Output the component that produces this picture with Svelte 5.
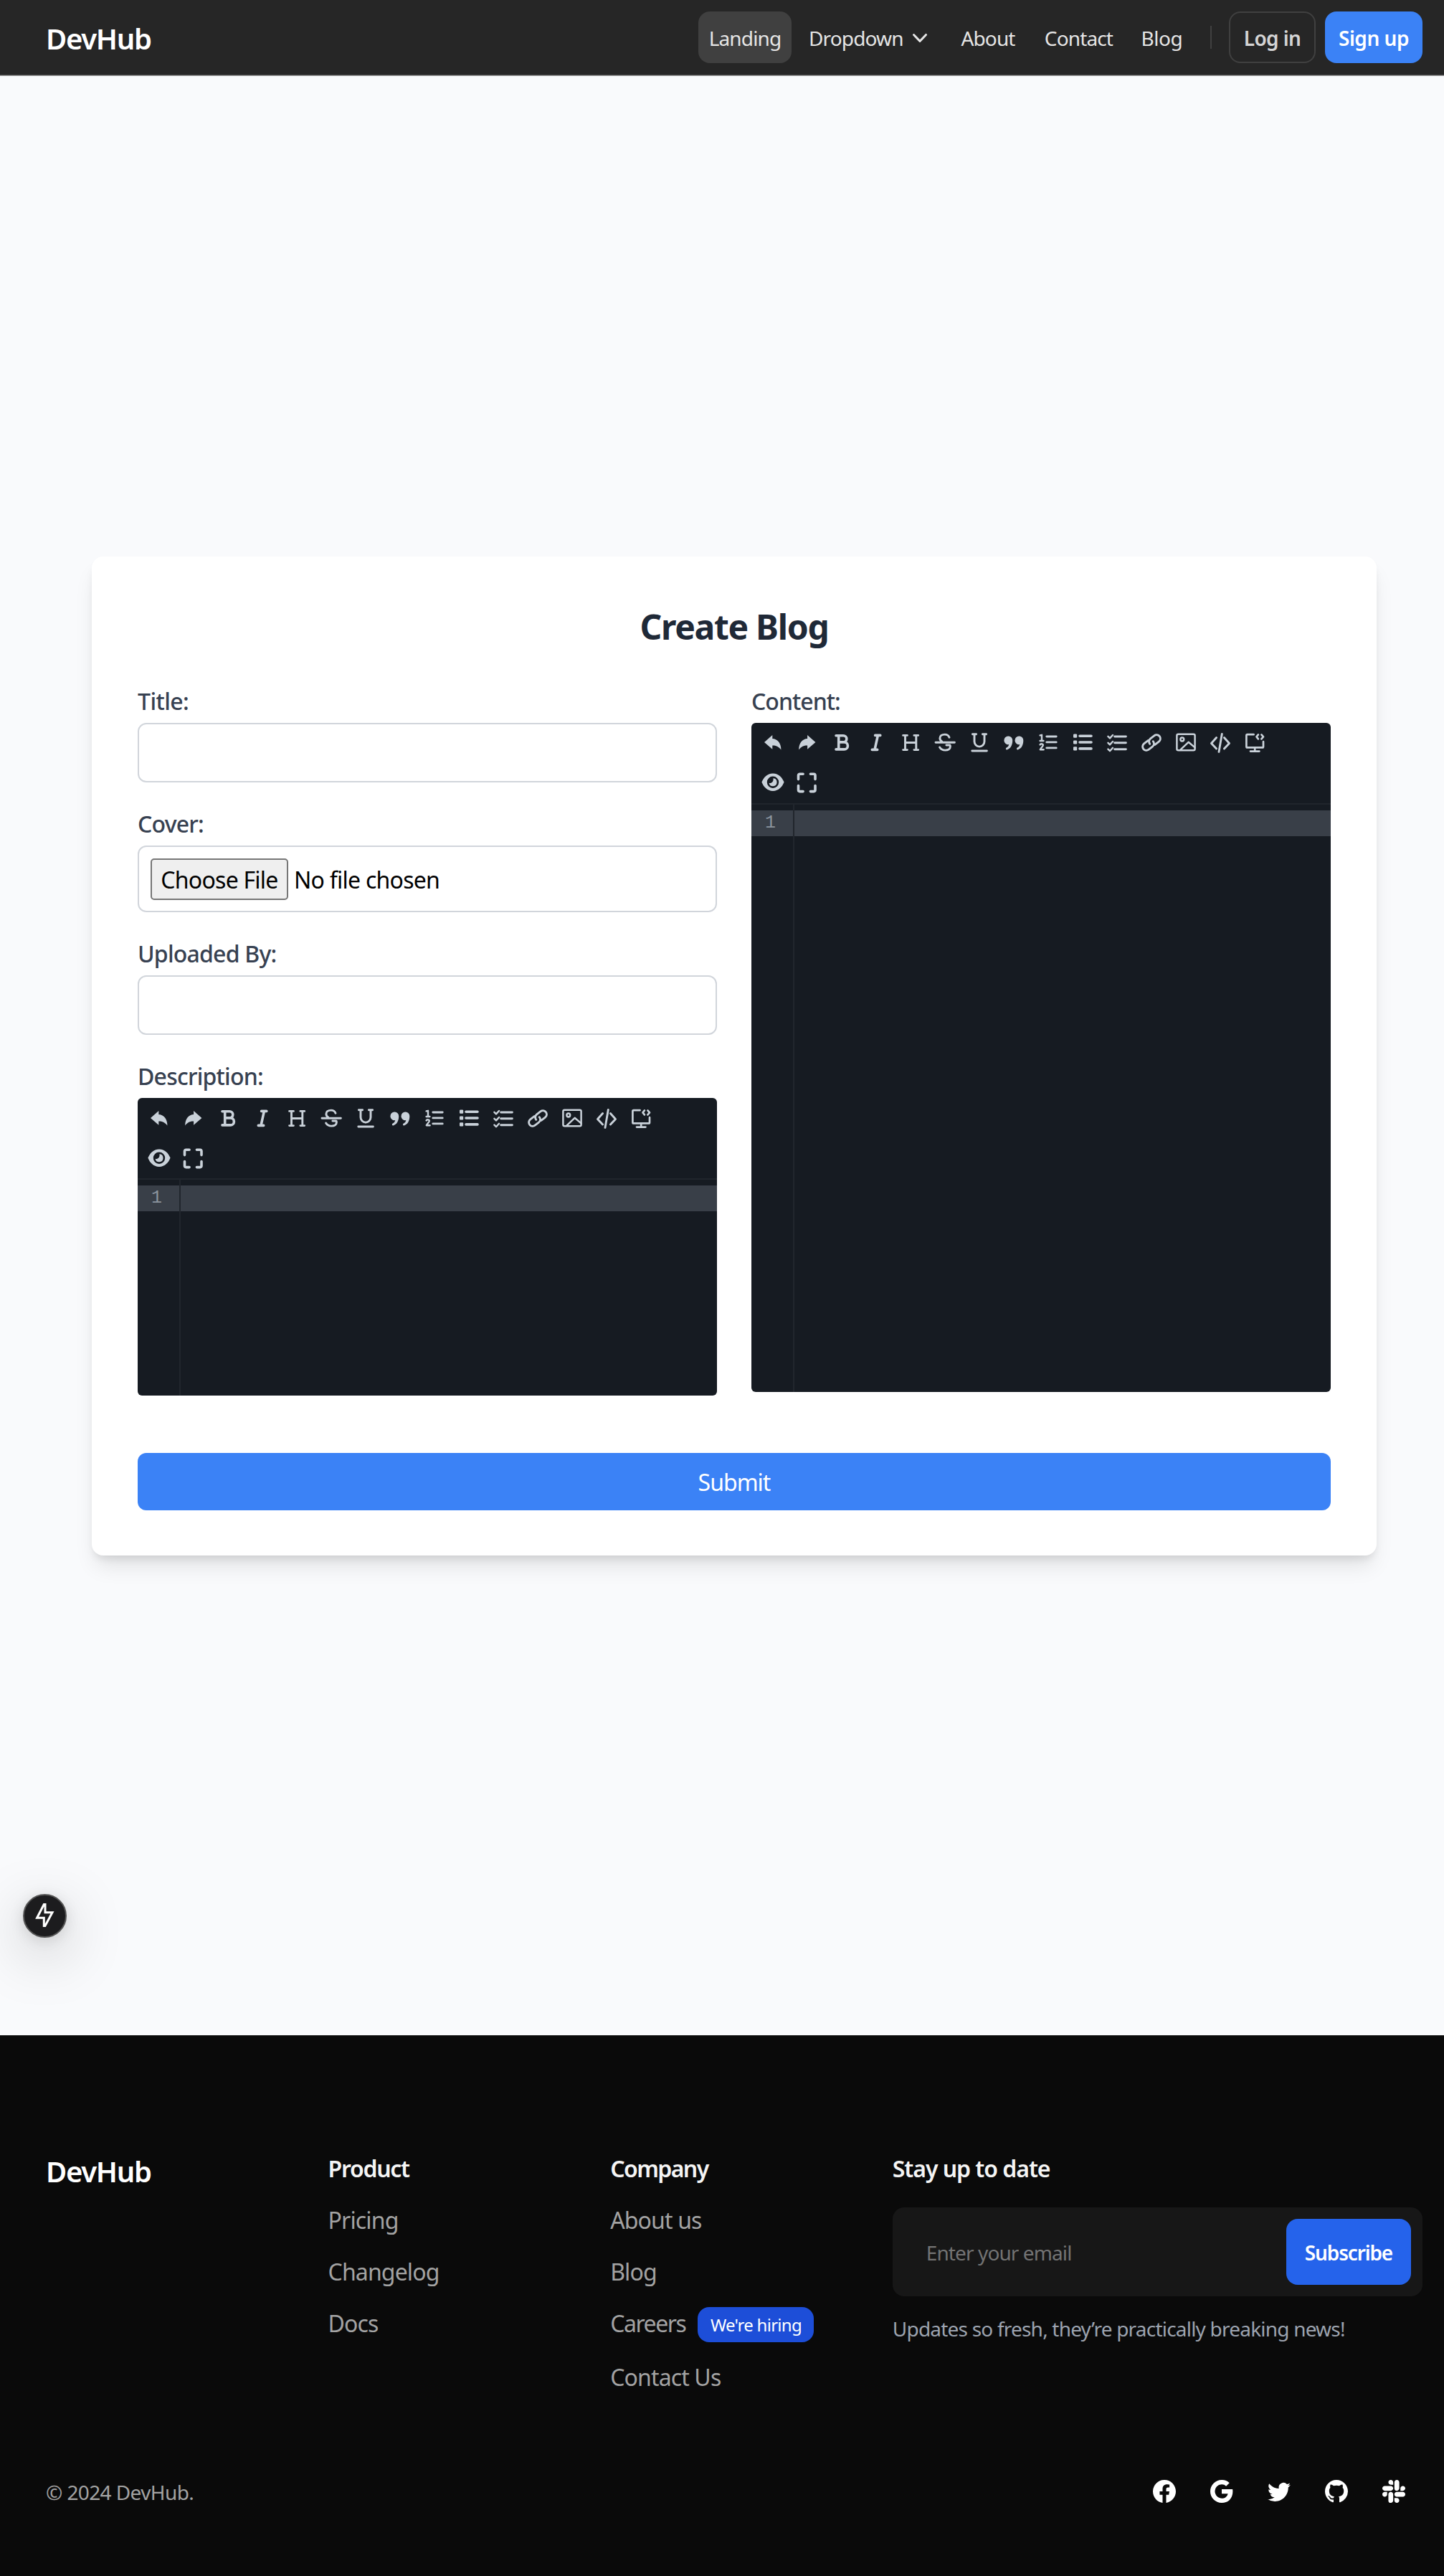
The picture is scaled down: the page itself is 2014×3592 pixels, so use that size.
<script>
  const tools = [
    'undo', 'redo', 'bold', 'italic', 'header', 'strike', 'underline', 'quote',
    'olist', 'ulist', 'todo', 'link', 'image', 'code', 'codeBlock', 'preview', 'fullscreen'
  ];

  const socials = [
    { name: 'Facebook', d: 'M16 8.049c0-4.446-3.582-8.05-8-8.05C3.58 0-.002 3.603-.002 8.05c0 4.017 2.926 7.347 6.75 7.951v-5.625h-2.03V8.05H6.75V6.275c0-2.017 1.195-3.131 3.022-3.131.876 0 1.791.157 1.791.157v1.98h-1.009c-.993 0-1.303.621-1.303 1.258v1.51h2.218l-.354 2.326H9.25V16c3.824-.604 6.75-3.934 6.75-7.951z' },
    { name: 'Google', d: 'M15.545 6.558a9.42 9.42 0 0 1 .139 1.626c0 2.434-.87 4.492-2.384 5.885h.002C11.978 15.292 10.158 16 8 16A8 8 0 1 1 8 0a7.689 7.689 0 0 1 5.352 2.082l-2.284 2.284A4.347 4.347 0 0 0 8 3.166c-2.087 0-3.86 1.408-4.492 3.304a4.792 4.792 0 0 0 0 3.063h.003c.635 1.893 2.405 3.301 4.492 3.301 1.078 0 2.004-.276 2.722-.764h-.003a3.702 3.702 0 0 0 1.599-2.431H8v-3.08h7.545z' },
    { name: 'Twitter', d: 'M5.026 15c6.038 0 9.341-5.003 9.341-9.334 0-.14 0-.282-.006-.422A6.685 6.685 0 0 0 16 3.542a6.658 6.658 0 0 1-1.889.518 3.301 3.301 0 0 0 1.447-1.817 6.533 6.533 0 0 1-2.087.793A3.286 3.286 0 0 0 7.875 6.03a9.325 9.325 0 0 1-6.767-3.429 3.289 3.289 0 0 0 1.018 4.382A3.323 3.323 0 0 1 .64 6.575v.045a3.288 3.288 0 0 0 2.632 3.218 3.203 3.203 0 0 1-.865.115 3.23 3.23 0 0 1-.614-.057 3.283 3.283 0 0 0 3.067 2.277A6.588 6.588 0 0 1 .78 13.58a6.32 6.32 0 0 1-.78-.045A9.344 9.344 0 0 0 5.026 15z' },
    { name: 'GitHub', d: 'M8 0C3.58 0 0 3.58 0 8c0 3.54 2.29 6.53 5.47 7.59.4.07.55-.17.55-.38 0-.19-.01-.82-.01-1.49-2.01.37-2.53-.49-2.69-.94-.09-.23-.48-.94-.82-1.13-.28-.15-.68-.52-.01-.53.63-.01 1.08.58 1.23.82.72 1.21 1.87.87 2.33.66.07-.52.28-.87.51-1.07-1.78-.2-3.64-.89-3.64-3.95 0-.87.31-1.59.82-2.15-.08-.2-.36-1.02.08-2.12 0 0 .67-.21 2.2.82.64-.18 1.32-.27 2-.27.68 0 1.36.09 2 .27 1.53-1.04 2.2-.82 2.2-.82.44 1.1.16 1.92.08 2.12.51.56.82 1.27.82 2.15 0 3.07-1.87 3.75-3.65 3.95.29.25.54.73.54 1.48 0 1.07-.01 1.93-.01 2.2 0 .21.15.46.55.38A8.012 8.012 0 0 0 16 8c0-4.42-3.58-8-8-8z' },
    { name: 'Slack', d: 'M3.362 10.11c0 .926-.756 1.681-1.681 1.681S0 11.036 0 10.111C0 9.186.756 8.43 1.68 8.43h1.682v1.68zm.846 0c0-.924.756-1.68 1.681-1.68s1.681.756 1.681 1.68v4.21c0 .924-.756 1.68-1.68 1.68a1.685 1.685 0 0 1-1.682-1.68v-4.21zM5.89 3.362c-.926 0-1.682-.756-1.682-1.681S4.964 0 5.89 0s1.68.756 1.68 1.68v1.682H5.89zm0 .846c.924 0 1.68.756 1.68 1.681S6.814 7.57 5.89 7.57H1.68C.757 7.57 0 6.814 0 5.89c0-.926.756-1.682 1.68-1.682h4.21zm6.749 1.682c0-.926.755-1.682 1.68-1.682.925 0 1.681.756 1.681 1.681s-.756 1.681-1.68 1.681h-1.681V5.89zm-.848 0c0 .924-.755 1.68-1.68 1.68A1.685 1.685 0 0 1 8.43 5.89V1.68C8.43.757 9.186 0 10.11 0c.926 0 1.681.756 1.681 1.68v4.21zm-1.681 6.748c.926 0 1.682.756 1.682 1.681S11.036 16 10.11 16s-1.681-.756-1.681-1.68v-1.682h1.68zm0-.847c-.924 0-1.68-.755-1.68-1.68 0-.925.756-1.681 1.68-1.681h4.21c.924 0 1.68.756 1.68 1.68 0 .926-.756 1.681-1.68 1.681h-4.21z' }
  ];
</script>

{#snippet toolIcon(name)}
  <svg class="tool-icon" viewBox="0 0 32 32" aria-hidden="true">
    {#if name === 'undo'}
      <path class="solid" d="M4 16 15.3 6v5C22 11.3 27.6 17 27.4 26.6 24 21.8 19 20.3 15.3 20.6v5.2z" />
    {:else if name === 'redo'}
      <path class="solid" d="M27.4 16 16.1 6v5C9.4 11.3 4 17 4.2 26.6 7.4 21.8 12.4 20.3 16.1 20.6v5.2z" />
    {:else if name === 'bold'}
      <path class="heavy" d="M8 6.7h10.2a4.6 4.6 0 0 1 0 9.2H12M8 25.9h11.4a5 5 0 0 0 0-10M11.7 6.7v19.2" />
    {:else if name === 'italic'}
      <path class="heavy" d="M14.6 6.4h7.2M10.3 26.4h7.4M18.4 6.4l-4.4 20" />
    {:else if name === 'header'}
      <path d="M5.6 6.4h5.8M20.9 6.4h5.8M5.6 26.6h5.8M20.9 26.6h5.8M8.5 6.4v20.2M23.8 6.4v20.2M8.5 16.5h15.3" />
    {:else if name === 'strike'}
      <path d="M3 16.3h26.4M22 9.2C21 6.6 18.8 5.1 15.7 5.1c-4 0-6.8 2.1-6.8 5.1 0 2 1 3.6 2.9 4.8M8.6 23c1.600 2.700 4.200 4.100 7.800 4.100 4.200 0 7-2 7-5 0-.8-.2-1.500-.5-2.100h-5" />
    {:else if name === 'underline'}
      <path d="M6.4 4.7h5.2M20.4 4.7h5.2M9 4.7v10.4a7 7 0 0 0 14 0V4.7M5.8 28h20.6" />
    {:else if name === 'quote'}
      <path class="solid" d="M8.4 7.6a5.7 5.7 0 0 1 5.8 6c0 7-3.2 11.8-7.8 12.8a1.5 1.5 0 0 1-.6-2.9c1.7-.6 3-2 3.4-4.4A5.8 5.8 0 1 1 8.4 7.6zM23.5 7.6a5.7 5.7 0 0 1 5.8 6c0 7-3.2 11.8-7.8 12.8a1.5 1.5 0 0 1-.6-2.9c1.7-.6 3-2 3.4-4.4a5.8 5.8 0 1 1-.8-11.5z" />
    {:else if name === 'olist'}
      <path d="M13.800 8h13.400M13.800 15.900h13.400M13.800 23.900h13.400" />
      <path class="fine" d="M4.600 6.400 7 5.800v8M4.600 14h4.800M4.600 19.400c.8-1.600 4.200-1.400 4.200.6 0 1.600-2.600 3.200-4 6.200h4.800" />
    {:else if name === 'ulist'}
      <path class="heavy" d="M12 7.200h16M12 16h16M12 24.900h16" />
      <path class="solid" d="M3.800 4.600h3.600l.8.8v3.600l-.8.8H3.800L3 9V5.400zM3.800 13.400h3.600l.8.8v3.600l-.8.8H3.800l-.8-.8v-3.600zM3.800 22.300h3.600l.8.8v3.600l-.8.8H3.800l-.8-.8v-3.600z" />
    {:else if name === 'todo'}
      <path d="M12.600 8h15.800M12.600 16.800h15.800M12.600 25.800h15.800" />
      <path class="fine" d="m3.400 7.800 2.600 2.600 4-4.400M3.400 16.800 6 19.400l4-4.400M3.400 25.600 6 28.200l4-4.400" />
    {:else if name === 'link'}
      <path d="M14 11.200H7a5.300 5.300 0 0 0 0 10.600h6.600a5.300 5.300 0 0 0 5.300-5.300M18 21.800h7a5.300 5.300 0 0 0 0-10.600h-6.600a5.300 5.300 0 0 0-5.300 5.300" transform="rotate(-38 16 16.5)" />
    {:else if name === 'image'}
      <g class="thin">
        <rect x="3.400" y="4.700" width="25.200" height="22.600" rx="2" />
        <circle cx="10.800" cy="12" r="2.400" />
        <path d="m8 26.800 11.600-11 9 7.600" />
      </g>
    {:else if name === 'code'}
      <path d="m10.600 9.600-7.100 7.800 7.100 7.600M21.400 9.600l7.100 7.800-7.100 7.600M18.300 4.400l-4.300 25" />
    {:else if name === 'codeBlock'}
      <path class="mid" d="M14.600 5.200H5.600a1.200 1.200 0 0 0-1.200 1.200v15.800a1.200 1.200 0 0 0 1.200 1.200h21.200a1.200 1.200 0 0 0 1.200-1.200v-7M16.200 24v4M10 28.600h12.400M20.900 5.400l-2.400 3 2.400 3M25.400 5.400l2.600 3-2.600 3" />
    {:else if name === 'preview'}
      <path class="solid" fill-rule="evenodd" d="M16 3.400c8 0 13.200 6 15.600 12.200C29.200 22 24 28 16 28S2.800 22 .4 15.600C2.800 9.400 8 3.400 16 3.400zM16 7.500a8.200 8.200 0 1 0 0 16.400 8.200 8.200 0 0 0 0-16.400z" />
      <path class="solid" d="M16.800 10.300a5.500 5.500 0 1 1-6.200 6.400c2.800 1.200 6.800-1.800 5.800-6.300z" />
    {:else}
      <path class="heavy" d="M3.500 11.600V6.200a2 2 0 0 1 2-2h4.600M20.400 4.200H25a2 2 0 0 1 2 2v5.400M27 20.600v6a2 2 0 0 1-2 2h-4.600M10.100 28.600H5.500a2 2 0 0 1-2-2v-6" />
    {/if}
  </svg>
{/snippet}

{#snippet editor(kind)}
  <div class="editor {kind}">
    <div class="toolbar">
      {#each tools as tool}
        <button class="tool" type="button" aria-label={tool}>{@render toolIcon(tool)}</button>
      {/each}
    </div>
    <div class="code-area">
      <div class="gutter"><div class="line-no">1</div></div>
      <div class="lines"><div class="line"></div></div>
    </div>
  </div>
{/snippet}

<div class="page">
  <header>
    <a class="logo" href="#top">DevHub</a>
    <nav>
      <a class="item landing" href="#landing">Landing</a>
      <a class="item dropdown" href="#menu">
        Dropdown
        <svg viewBox="0 0 20 20" aria-hidden="true"><path fill-rule="evenodd" d="M5.230 7.210a.75.75 0 0 1 1.060.020L10 11.168l3.710-3.938a.75.75 0 1 1 1.080 1.040l-4.250 4.500a.75.75 0 0 1-1.080 0l-4.250-4.500a.75.75 0 0 1 .020-1.060z" /></svg>
      </a>
      <a class="item about" href="#about">About</a>
      <a class="item contact" href="#contact">Contact</a>
      <a class="item blog" href="#blog">Blog</a>
    </nav>
    <span class="divider"></span>
    <a class="login" href="#login">Log in</a>
    <a class="signup" href="#signup">Sign up</a>
  </header>

  <main>
    <form class="card">
      <h2>Create Blog</h2>
      <div class="columns">
        <div class="col">
          <div class="field">
            <span class="label title">Title:</span>
            <div class="input"></div>
          </div>
          <div class="field">
            <span class="label">Cover:</span>
            <div class="input file">
              <span class="choose">Choose File</span>
              <span class="nofile">No file chosen</span>
            </div>
          </div>
          <div class="field">
            <span class="label">Uploaded By:</span>
            <div class="input"></div>
          </div>
          <div class="field">
            <span class="label">Description:</span>
            {@render editor('short')}
          </div>
        </div>
        <div class="col">
          <div class="field">
            <span class="label content">Content:</span>
            {@render editor('tall')}
          </div>
        </div>
      </div>
      <button class="submit" type="button">Submit</button>
    </form>
  </main>

  <div class="indicator">
    <svg viewBox="0 0 60 60" aria-hidden="true"><path d="M29.300 14.500 19.600 33.300h9.700v11.200h1.600L41 25.700H31V14.500z" /></svg>
  </div>

  <footer>
    <div class="grid">
      <a class="logo" href="#top">DevHub</a>
      <div class="links">
        <h4 class="product">Product</h4>
        <a href="#pricing">Pricing</a>
        <a href="#changelog">Changelog</a>
        <a href="#docs">Docs</a>
      </div>
      <div class="links">
        <h4 class="company">Company</h4>
        <a href="#about">About us</a>
        <a href="#blog">Blog</a>
        <div class="careers"><a href="#careers">Careers</a><span class="badge">We're hiring</span></div>
        <a href="#contact">Contact Us</a>
      </div>
      <div class="news">
        <h4>Stay up to date</h4>
        <div class="signup-box">
          <span class="placeholder">Enter your email</span>
          <button class="subscribe" type="button">Subscribe</button>
        </div>
        <p>Updates so fresh, they’re practically breaking news!</p>
      </div>
    </div>
    <div class="bottom">
      <p>© 2024 DevHub.</p>
      <div class="socials">
        {#each socials as s}
          <a href="#social" aria-label={s.name}><svg viewBox="0 0 16 16"><path d={s.d} /></svg></a>
        {/each}
      </div>
    </div>
  </footer>
</div>

<style>
  :global(body) { background: #f9fafc; }
  .page, .page * { box-sizing: border-box; }
  .page {
    position: relative;
    display: flex;
    flex-direction: column;
    width: 2014px;
    height: 3592px;
    overflow: hidden;
    font: 400 32px/48px "Noto Sans", "Open Sans", sans-serif;
    letter-spacing: -0.027em;
    color: #000;
    background: #f9fafc;
  }
  a { color: inherit; text-decoration: none; }
  h2, h4, p { margin: 0; }
  button { font: inherit; letter-spacing: inherit; border: 0; margin: 0; padding: 0; }
  .logo { font-size: 40px; font-weight: 600; line-height: 60px; letter-spacing: -1.3px; color: #fff; }

  header {
    display: flex;
    align-items: center;
    flex: none;
    height: 105px;
    padding: 0 30px 0 64px;
    background: #262626;
    border-bottom: 1px solid #484848;
    box-shadow: 0 1px 0 #999;
    font-size: 28px;
    color: #e5e5e5;
  }
  header .logo { flex: 1; padding-top: 3px; }
  nav { display: flex; gap: 8px; }
  .item, .login, .signup {
    display: flex;
    align-items: center;
    justify-content: center;
    height: 72px;
    padding-top: 2px;
    border-radius: 16px;
    white-space: nowrap;
  }
  .landing { width: 130px; background: #404040; }
  .dropdown { width: 204px; justify-content: flex-start; padding-left: 16px; }
  .dropdown svg { width: 40px; height: 40px; margin-left: 3px; fill: currentColor; }
  .about { width: 108px; }
  .contact { width: 129px; }
  .blog { width: 87px; letter-spacing: -0.45px; }
  .divider { width: 2px; height: 32px; margin: 0 24px 0 24px; background: #404040; }
  .login { width: 121px; margin-right: 13px; border: 2px solid #404040; font-weight: 600; letter-spacing: -0.600px; color: #d4d4d4; }
  .signup { width: 136px; background: #3b82f6; color: #fff; font-weight: 600; letter-spacing: -0.48px; }

  main { display: flex; justify-content: center; flex: none; height: 2733px; padding: 671px 94px 0 128px; }
  .card {
    width: 1792px;
    height: 1393px;
    padding: 64px;
    border-radius: 16px;
    background: #fff;
    box-shadow: 0 20px 30px -6px rgba(0, 0, 0, 0.1), 0 8px 12px -4px rgba(0, 0, 0, 0.1);
  }
  h2 { height: 64px; margin-bottom: 48px; line-height: 68px; font-size: 48px; font-weight: 700; letter-spacing: -1.3px; text-align: center; color: #1f2937; }
  .columns { display: grid; grid-template-columns: 808px 808px; gap: 48px; height: 1073.5px; }
  .col { display: flex; flex-direction: column; gap: 32px; }
  .label { display: block; height: 48px; margin-bottom: 8px; line-height: 51px; font-weight: 500; letter-spacing: -0.78px; color: #374151; }
  .label.title { letter-spacing: -0.58px; }
  .label.content { letter-spacing: -0.98px; }
  .input { height: 83px; border: 2px solid #d1d5db; border-radius: 12px; background: #fff; }
  .input.file { display: flex; align-items: center; height: 93px; padding: 0 16px; }
  .choose {
    display: flex;
    justify-content: center;
    width: 192px;
    height: 58px;
    margin-right: 8px;
    line-height: 56px;
    border: 2px solid #767676;
    border-radius: 5px;
    background: #efefef;
    letter-spacing: -0.75px;
  }
  .nofile { padding-top: 3px; letter-spacing: -0.75px; }

  .editor { display: flex; flex-direction: column; overflow: hidden; border-radius: 6px; background: #161b22; }
  .editor.short { height: 415px; }
  .editor.tall { height: 933px; }
  .toolbar {
    display: flex;
    flex-wrap: wrap;
    align-content: flex-start;
    flex: none;
    height: 114px;
    padding: 3px 50px 0 6px;
    border-bottom: 2px solid #20252c;
  }
  .short .toolbar { padding-top: 4px; }
  .tool { display: flex; align-items: center; justify-content: center; width: 48px; height: 48px; margin-bottom: 8px; background: none; }
  .tool-icon { width: 32px; height: 32px; overflow: visible; fill: none; stroke: #c9d1d9; stroke-width: 2.900; stroke-linecap: round; stroke-linejoin: round; }
  .tool-icon .solid { fill: #c9d1d9; stroke: none; }
  .tool-icon .heavy { stroke-width: 3.600; }
  .tool-icon .mid { stroke-width: 2.700; }
  .tool-icon .thin { stroke-width: 2.500; }
  .tool-icon .fine { stroke-width: 2.400; }
  .code-area { display: flex; flex: 1; }
  .gutter { width: 60px; padding-top: 8px; border-right: 2px solid #21262d; }
  .line-no {
    height: 35.500px;
    padding-right: 24px;
    background: #393f48;
    color: #8b949e;
    font: 25px/36px "Liberation Mono", monospace;
    letter-spacing: 0;
    text-align: right;
  }
  .lines { flex: 1; padding-top: 8px; }
  .line { height: 35.500px; background: #393f48; }
  .submit { width: 100%; height: 80px; padding-top: 2px; border-radius: 12px; background: #3b82f6; color: #fff; letter-spacing: -1px; }

  .indicator {
    position: absolute;
    left: 32px;
    top: 2641px;
    width: 61px;
    height: 61px;
    border: 2px solid #555;
    border-radius: 50%;
    background: #1c1c1e;
    box-shadow: 0 22px 80px rgba(0, 0, 0, 0.25), 0 4px 20px rgba(0, 0, 0, 0.12);
  }
  .indicator svg { display: block; width: 60px; height: 60px; margin: -2px; fill: none; stroke: #fff; stroke-width: 3; }

  footer { position: relative; flex: none; height: 754px; padding: 160px 30px 0 64px; background: #0a0a0a; color: #a3a3a3; }
  .grid { display: grid; grid-template-columns: repeat(5, 345.600px); gap: 48px; height: 452px; align-items: start; }
  .links { display: flex; flex-direction: column; align-items: flex-start; gap: 24px; }
  .links a { height: 48px; line-height: 51px; }
  h4 { height: 48px; line-height: 51px; font-size: 32px; font-weight: 600; letter-spacing: -1.050px; color: #f5f5f5; }
  .product { letter-spacing: -1.280px; }
  .company { letter-spacing: -1.600px; }
  .careers { display: flex; align-items: flex-start; height: 51px; }
  .careers a { letter-spacing: -1.450px; }
  .badge {
    width: 162px;
    height: 49px;
    margin: 3px 0 0 17px;
    border-radius: 16px;
    background: #1d4ed8;
    color: #fff;
    font-size: 24px;
    line-height: 50px;
    letter-spacing: -0.730px;
    text-align: center;
  }
  .news { grid-column: span 2; font-size: 28px; color: #9ca3af; }
  .signup-box { display: flex; align-items: center; justify-content: space-between; height: 124px; margin: 32px 0 24px; padding: 0 16px 0 47px; border-radius: 16px; background: #171717; }
  .placeholder { padding-top: 2px; letter-spacing: -0.900px; color: #737373; }
  .subscribe { width: 174px; height: 92px; padding-top: 2px; border-radius: 16px; background: #2563eb; color: #fff; font-weight: 600; letter-spacing: -1.160px; }
  .news p { line-height: 42px; letter-spacing: -0.790px; }
  .bottom { display: flex; align-items: center; justify-content: space-between; height: 48px; padding-right: 24px; font-size: 28px; }
  .bottom p { padding-top: 2px; letter-spacing: -0.600px; }
  .socials { display: flex; gap: 48px; }
  .socials a, .socials svg { display: block; width: 32px; height: 32px; fill: #fff; }
</style>
